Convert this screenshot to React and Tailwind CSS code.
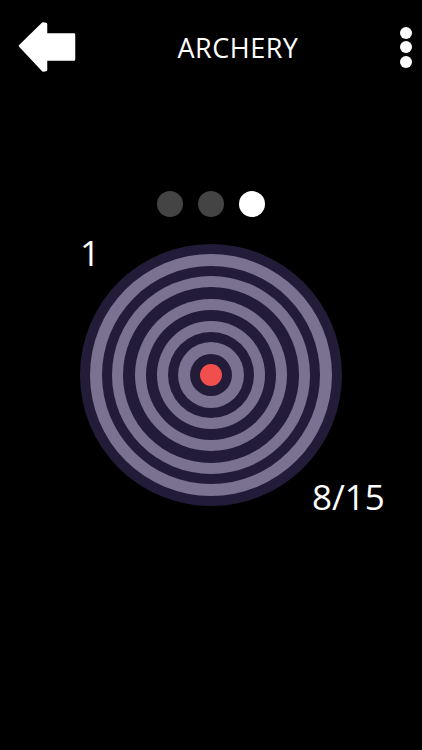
export default function App() {
  const rings = [
    [131, "#231c38"],
    [121, "#7b7190"],
    [109, "#231c38"],
    [99, "#7b7190"],
    [88, "#231c38"],
    [76, "#7b7190"],
    [65, "#231c38"],
    [54, "#7b7190"],
    [43, "#231c38"],
    [33, "#7b7190"],
    [21, "#231c38"],
    [11, "#f04f4e"],
  ];
  return (
    <div className="w-[422px] h-[750px] bg-black overflow-hidden" style={{ fontFamily: '"Open Sans", "Noto Sans", sans-serif' }}>
      <div className="flex items-center h-[94px]">
        <svg className="ml-[18px]" width="58" height="52" viewBox="0 0 58 52">
          <path
            d="M2 25 L25 2.5 L28 3 L28 13.5 L56 13.5 L56 38.5 L28 38.5 L28 49 L25 49.5 Z"
            fill="#fff"
            stroke="#fff"
            strokeWidth="2.5"
            strokeLinejoin="round"
          />
        </svg>
        <div className="flex-1 text-center text-white text-[27px] font-medium tracking-[0.5px] leading-none">ARCHERY</div>
        <div className="flex flex-col gap-[2.5px] mr-[10px]">
          <div className="w-[12px] h-[12px] rounded-full bg-white" />
          <div className="w-[12px] h-[12px] rounded-full bg-white" />
          <div className="w-[12px] h-[12px] rounded-full bg-white" />
        </div>
      </div>
      <div className="flex justify-center gap-[15px] mt-[97px]">
        <div className="w-[26px] h-[26px] rounded-full bg-[#444444]" />
        <div className="w-[26px] h-[26px] rounded-full bg-[#444444]" />
        <div className="w-[26px] h-[26px] rounded-full bg-white" />
      </div>
      <div className="relative mt-[27px] flex justify-center">
        <svg width="262" height="262" viewBox="0 0 262 262">
          {rings.map(([r, c], i) => (
            <circle key={i} cx="131" cy="131" r={r} fill={c} />
          ))}
        </svg>
        <div className="absolute left-[80px] top-[-9px] text-white text-[35px] leading-none">1</div>
        <div className="absolute left-[312px] top-[235px] text-white text-[35px] leading-none">8/15</div>
      </div>
    </div>
  );
}
